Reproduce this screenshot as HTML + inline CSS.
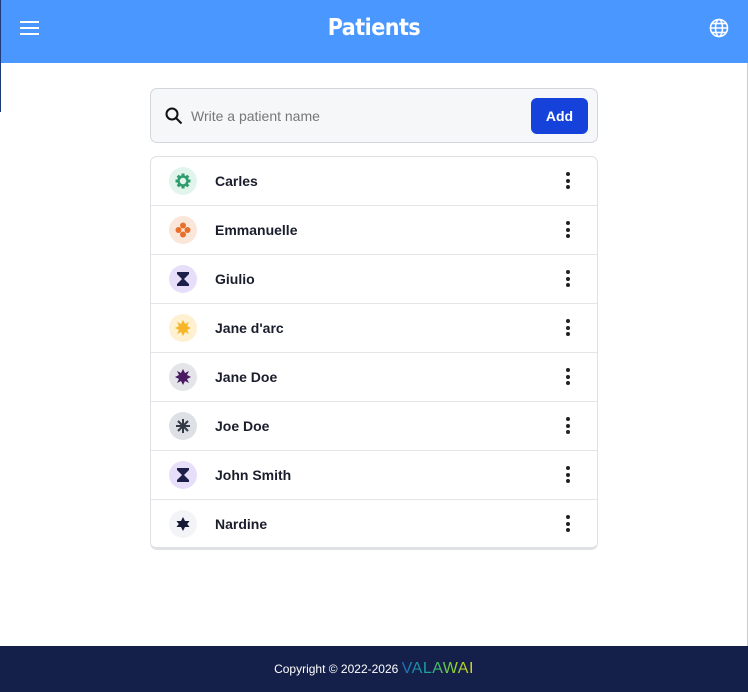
<!DOCTYPE html>
<html><head><meta charset="utf-8"><style>
*{box-sizing:border-box;margin:0;padding:0}
body{width:748px;height:692px;position:relative;background:#fff;font-family:"Liberation Sans",sans-serif;overflow:hidden;border-right:1px solid #ccc}
.hdr{position:absolute;left:0;top:0;width:748px;height:63px;background:#4a98ff}
.hdr h1{position:absolute;left:0;right:0;top:15px;text-align:center;color:#fff;font-size:23px;font-weight:900;letter-spacing:-0.5px;font-family:"DejaVu Sans Condensed","Liberation Sans Narrow",sans-serif}
.edge{position:absolute;left:0;top:0;width:1px;height:112px;background:#1f3a7a}
.search{position:absolute;left:150px;top:88px;width:448px;height:55px;background:#f6f7f9;border:1px solid #d3d6db;border-radius:7px}
.search .ph{position:absolute;left:40px;top:19px;font-size:14px;color:#777}
.add{position:absolute;right:9px;top:9px;width:57px;height:36px;background:#1542db;border-radius:6px;color:#fff;font-weight:bold;font-size:14px;text-align:center;line-height:36px}
.list{position:absolute;left:150px;top:156px;width:448px;height:394px;border:1px solid #dfe1e5;border-radius:7px;border-bottom:3px solid #dfe1e5}
.row{position:absolute;left:0;width:446px;height:49px;border-bottom:1px solid #e3e5e8}
.ic{position:absolute;left:18px;top:10px;width:28px;height:28px;border-radius:50%}
.ic svg{position:absolute;left:5px;top:5px}
.nm{position:absolute;left:64px;top:16px;font-size:14px;font-weight:bold;color:#1a1d2b}
.kb{position:absolute;left:415px;top:15px;width:4px}
.kb i{display:block;width:4px;height:4px;border-radius:50%;background:#222;margin-bottom:2.5px}
.ftr{position:absolute;left:0;top:646px;width:748px;height:46px;background:#15204a;color:#fff;font-size:12px;text-align:center;line-height:46px}
.ftr b{font-weight:normal;font-size:16px;letter-spacing:0.5px;background:linear-gradient(90deg,#1e6fb8,#1aa3a0,#7bd13a,#e3d51c);-webkit-background-clip:text;color:transparent}
</style></head><body>
<div class="hdr">
<svg style="position:absolute;left:20px;top:21px" width="19" height="14"><rect y="0" width="19" height="2" fill="#fff"/><rect y="6" width="19" height="2" fill="#fff"/><rect y="12" width="19" height="2" fill="#fff"/></svg>
<h1>Patients</h1>
<svg style="position:absolute;left:709px;top:18px" width="20" height="20" viewBox="0 0 20 20" fill="none" stroke="#fff" stroke-width="1.6"><circle cx="10" cy="10" r="8.5"/><ellipse cx="10" cy="10" rx="3.5" ry="8.5"/><line x1="1.5" y1="10" x2="18.5" y2="10"/><line x1="3" y1="5.5" x2="17" y2="5.5"/><line x1="3" y1="14.5" x2="17" y2="14.5"/></svg>
</div>
<div class="edge"></div>
<div class="search">
<svg style="position:absolute;left:14px;top:18px" width="18" height="18" viewBox="0 0 18 18" fill="none" stroke="#111" stroke-width="2"><circle cx="7" cy="7" r="5.5"/><line x1="11" y1="11" x2="16.5" y2="16.5"/></svg>
<div class="ph">Write a patient name</div>
<div class="add">Add</div>
</div>
<div class="list">
<div class="row" style="top:0"><div class="ic" style="background:#e2f5ec"><svg width="18" height="18" viewBox="0 0 18 18"><circle cx="9" cy="9" r="4.5" fill="none" stroke="#2f9c6e" stroke-width="2.5"/><g fill="#2f9c6e"><rect x="7.5" y="1.5" width="3" height="3"/><rect x="7.5" y="13.5" width="3" height="3"/><rect x="1.5" y="7.5" width="3" height="3"/><rect x="13.5" y="7.5" width="3" height="3"/><g transform="rotate(45 9 9)"><rect x="7.5" y="1.5" width="3" height="3"/><rect x="7.5" y="13.5" width="3" height="3"/><rect x="1.5" y="7.5" width="3" height="3"/><rect x="13.5" y="7.5" width="3" height="3"/></g></g></svg></div><div class="nm">Carles</div><div class="kb"><i></i><i></i><i></i></div></div>
<div class="row" style="top:49px"><div class="ic" style="background:#fbe7d9"><svg width="18" height="18" viewBox="0 0 18 18" fill="#e86f2b"><circle cx="9" cy="4.5" r="3"/><circle cx="9" cy="13.5" r="3"/><circle cx="4.5" cy="9" r="3"/><circle cx="13.5" cy="9" r="3"/></svg></div><div class="nm">Emmanuelle</div><div class="kb"><i></i><i></i><i></i></div></div>
<div class="row" style="top:98px"><div class="ic" style="background:#e7defa"><svg width="18" height="18" viewBox="0 0 18 18" fill="#1c1f4a"><path d="M3 2h12v2l-5 5 5 5v2H3v-2l5-5-5-5z"/></svg></div><div class="nm">Giulio</div><div class="kb"><i></i><i></i><i></i></div></div>
<div class="row" style="top:147px"><div class="ic" style="background:#fdf1d2"><svg width="18" height="18" viewBox="0 0 18 18" fill="#f7b52a"><path d="M9 1l2 4 4-2-2 4 4 2-4 2 2 4-4-2-2 4-2-4-4 2 2-4-4-2 4-2-2-4 4 2z"/></svg></div><div class="nm">Jane d'arc</div><div class="kb"><i></i><i></i><i></i></div></div>
<div class="row" style="top:196px"><div class="ic" style="background:#e3e5e9"><svg width="18" height="18" viewBox="0 0 18 18" fill="#4a1a63"><path d="M9 1l2 4 4-2-2 4 4 2-4 2 2 4-4-2-2 4-2-4-4 2 2-4-4-2 4-2-2-4 4 2z"/></svg></div><div class="nm">Jane Doe</div><div class="kb"><i></i><i></i><i></i></div></div>
<div class="row" style="top:245px"><div class="ic" style="background:#dde0e5"><svg width="18" height="18" viewBox="0 0 18 18" stroke="#333a45" stroke-width="2"><line x1="9" y1="2" x2="9" y2="16"/><line x1="2" y1="9" x2="16" y2="9"/><line x1="4" y1="4" x2="14" y2="14"/><line x1="14" y1="4" x2="4" y2="14"/></svg></div><div class="nm">Joe Doe</div><div class="kb"><i></i><i></i><i></i></div></div>
<div class="row" style="top:294px"><div class="ic" style="background:#e7defa"><svg width="18" height="18" viewBox="0 0 18 18" fill="#1c1f4a"><path d="M3 2h12v2l-5 5 5 5v2H3v-2l5-5-5-5z"/></svg></div><div class="nm">John Smith</div><div class="kb"><i></i><i></i><i></i></div></div>
<div class="row" style="top:343px;border-bottom:none"><div class="ic" style="background:#f3f4f7"><svg width="18" height="18" viewBox="0 0 18 18" fill="#141a33"><path d="M9 2l2 4h4.5l-2.3 3 2.3 3H11l-2 4-2-4H2.5l2.3-3-2.3-3H7z"/></svg></div><div class="nm">Nardine</div><div class="kb"><i></i><i></i><i></i></div></div>
</div>
<div class="ftr">Copyright © 2022-2026 <b>VALAWAI</b></div>
</body></html>
